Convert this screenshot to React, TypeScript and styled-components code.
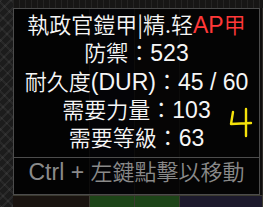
import * as React from 'react';
import styled, {createGlobalStyle} from 'styled-components';

const GlobalStyle = createGlobalStyle`
  html, body {
    margin: 0;
    padding: 0;
    background: #0a0a0a;
  }
`;

const Scene = styled.div`
  position: relative;
  width: 263px;
  height: 207px;
  overflow: hidden;
  display: flex;
  flex-direction: row;
  background: #0b0b0b;
`;

const StoneEdge = styled.div`
  width: 13px;
  flex-shrink: 0;
  background:
    repeating-linear-gradient(135deg, rgba(255, 255, 255, 0.06) 0 2px, transparent 2px 7px),
    repeating-linear-gradient(45deg, rgba(255, 255, 255, 0.05) 0 2px, transparent 2px 9px),
    #1c1c1c;
`;

const Panel = styled.div`
  flex: 1;
  display: grid;
  grid-template-columns: 77px 45px 45px 1fr;
  grid-template-rows: 8px 187px 1fr;
  background: #0e0d0c;
`;

const TopStrip = styled.div`
  grid-column: 1 / -1;
  background:
    repeating-linear-gradient(90deg, rgba(255, 255, 255, 0.06) 0 1px, transparent 1px 6px),
    #171615;
`;

const Column = styled.div<{ tone: string }>`
  background: ${(p) => p.tone};
  border-right: 1px solid #2c2926;
`;

const Cell = styled.div<{ tone: string }>`
  background: ${(p) => p.tone};
  border-top: 1px solid #3b3a30;
  border-right: 1px solid #3b3a30;
`;

const Tooltip = styled.div`
  position: absolute;
  left: 13px;
  top: 8px;
  width: 245px;
  height: 185px;
  border: 1px solid #4c4c4c;
  background: rgba(0, 0, 0, 0.7);
  display: flex;
  flex-direction: column;
  align-items: center;
  font-family: "Noto Sans CJK TC", "Liberation Sans", sans-serif;
  font-weight: 350;
  font-size: 22px;
  color: #f6f6f6;
`;

const Line = styled.div`
  height: 28.3px;
  line-height: 28px;
  white-space: nowrap;
  text-align: center;
`;

const Latin = styled.span`
  font-family: "Liberation Sans", "Noto Sans CJK TC", sans-serif;
  font-weight: 400;
  font-size: 23px;
`;

const Red = styled.span`
  color: #ff3838;
`;

const Divider = styled.div`
  align-self: stretch;
  height: 1px;
  background: #4c4c4c;
  margin-top: 7px;
`;

const Hint = styled(Line)`
  margin-top: -2px;
  color: #8a8a8a;
`;

const Mark = styled.svg`
  position: absolute;
  left: 228px;
  top: 105px;
`;

export default function App() {
  return (
    <>
      <GlobalStyle />
      <Scene>
        <StoneEdge />
        <Panel>
          <TopStrip />
          <Column tone="#0c0c0d" />
          <Column tone="#10101a" />
          <Column tone="#151311" />
          <Column tone="#0f0e0e" />
          <Cell tone="#1a1410" />
          <Cell tone="#1d4418" />
          <Cell tone="#1d4418" />
          <Cell tone="#1c1a2c" />
        </Panel>
        <Tooltip>
          <Line>
            執政官鎧甲|精.轻<Red><Latin>AP</Latin>甲</Red>
          </Line>
          <Line>
            防禦：<Latin>523</Latin>
          </Line>
          <Line>
            耐久度<Latin>(DUR)</Latin>：<Latin>45 / 60</Latin>
          </Line>
          <Line>
            需要力量：<Latin>103</Latin>
          </Line>
          <Line>
            需要等級：<Latin>63</Latin>
          </Line>
          <Divider />
          <Hint>
            <Latin>Ctrl + </Latin>左鍵點擊以移動
          </Hint>
        </Tooltip>
        <Mark width="28" height="34" viewBox="0 0 28 34">
          <path
            d="M5 7 L3 19 L23 18 M18 4 L18 31"
            fill="none"
            stroke="#f5e20a"
            strokeWidth="2.4"
            strokeLinecap="round"
            strokeLinejoin="round"
          />
        </Mark>
      </Scene>
    </>
  );
}
